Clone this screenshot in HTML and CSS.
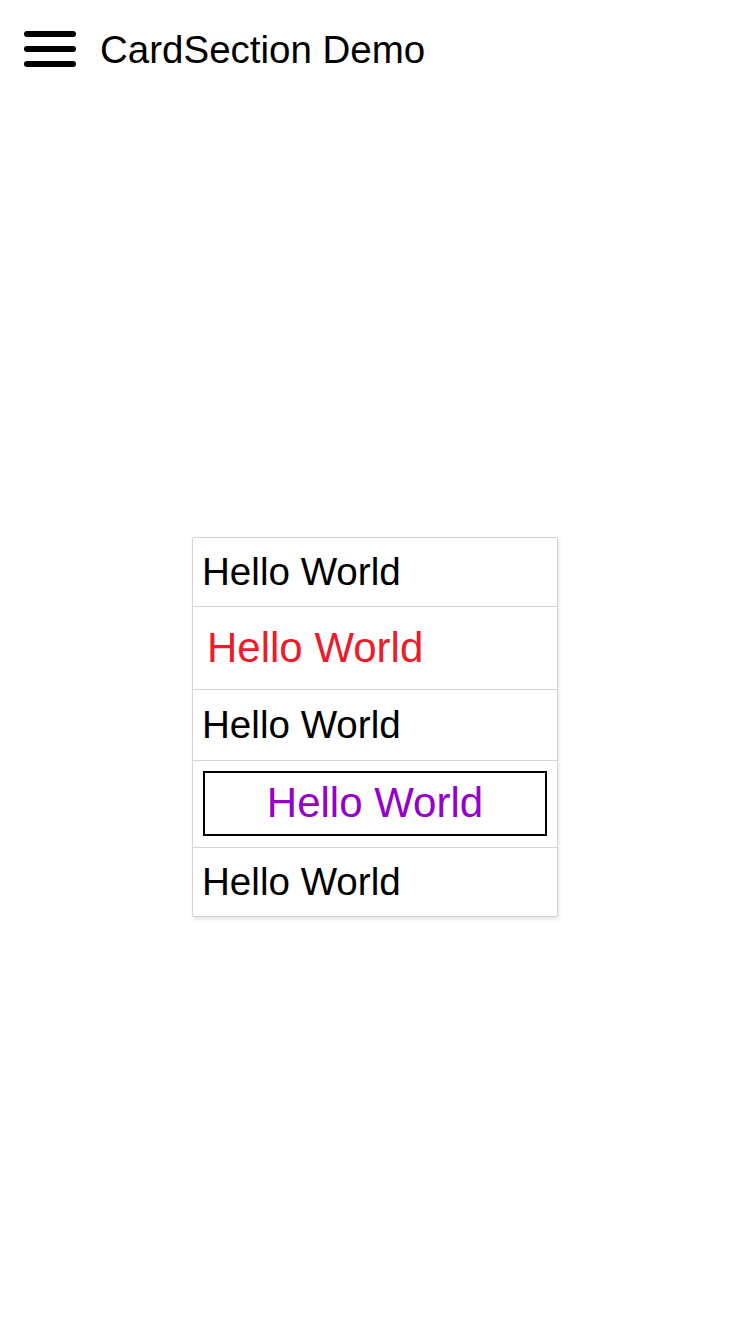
FILE: index.html
```html
<!DOCTYPE html>
<html>
<head>
<meta charset="utf-8">
<link rel="stylesheet" href="styles.css">
</head>
<body>
<header class="header">
  <svg class="menu-icon" width="52" height="38" viewBox="0 0 52 38">
    <line x1="3" y1="3" x2="49" y2="3" stroke="#000" stroke-width="6" stroke-linecap="round"/>
    <line x1="3" y1="18" x2="49" y2="18" stroke="#000" stroke-width="6" stroke-linecap="round"/>
    <line x1="3" y1="33" x2="49" y2="33" stroke="#000" stroke-width="6" stroke-linecap="round"/>
  </svg>
  <h1 class="title">CardSection Demo</h1>
</header>
<main class="main">
  <div class="card">
    <div class="section">Hello World</div>
    <div class="section section-red">Hello World</div>
    <div class="section section-tall">Hello World</div>
    <div class="section section-boxed"><div class="boxed">Hello World</div></div>
    <div class="section">Hello World</div>
  </div>
</main>
</body>
</html>
```
FILE: styles.css
```css
html, body {
  margin: 0;
  padding: 0;
  background: #fff;
}
body {
  width: 750px;
  height: 1334px;
  font-family: "Liberation Sans", Arial, sans-serif;
  color: #000;
  display: flex;
  flex-direction: column;
}
.header {
  height: 100px;
  display: flex;
  align-items: center;
  padding-left: 24px;
  box-sizing: border-box;
}
.menu-icon {
  display: block;
  flex: none;
}
.title {
  margin: 0 0 0 24px;
  font-weight: normal;
  font-size: 38.5px;
  line-height: 46px;
}
.main {
  flex: 1;
  display: flex;
  justify-content: center;
  padding-top: 437px;
  align-items: flex-start;
}
.card {
  width: 366px;
  box-sizing: border-box;
  border: 1px solid #d4d4d4;
  border-radius: 2px;
  box-shadow: 1px 2px 4px rgba(0,0,0,0.12);
  background: #fff;
}
.section {
  font-size: 38.6px;
  line-height: 44px;
  padding: 12px 9px;
  border-top: 1px solid #d4d4d4;
  white-space: nowrap;
}
.section:first-child {
  border-top: none;
}
.section-tall {
  padding: 13px 9px;
}
.section-red {
  color: #ec1c2c;
  font-size: 42px;
  line-height: 48px;
  padding: 17px 14px;
}
.section-boxed {
  padding: 10px 10px 11px;
}
.boxed {
  border: 2px solid #000;
  color: #9500cf;
  font-size: 42px;
  line-height: 48px;
  padding: 6px 0 7px;
  text-align: center;
}
```
